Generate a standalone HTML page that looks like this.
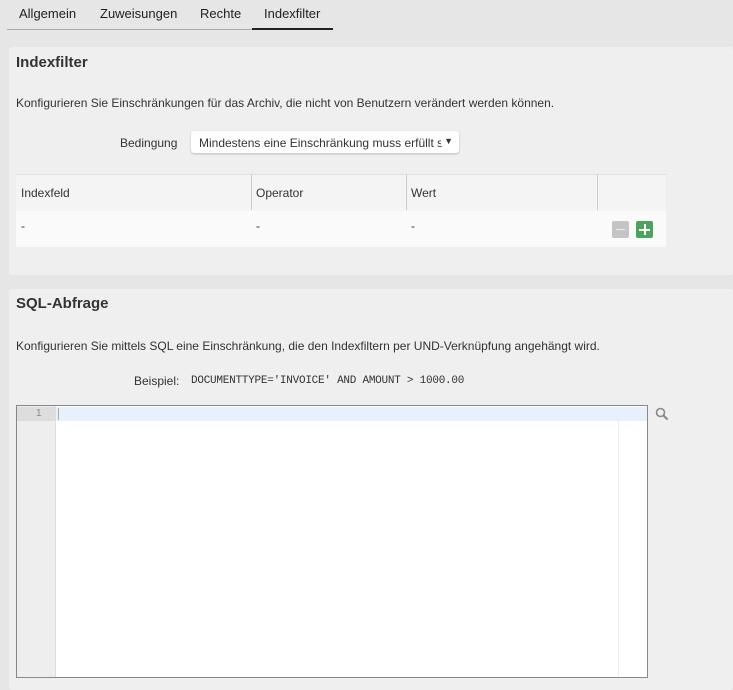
<!DOCTYPE html>
<html><head><meta charset="utf-8"><style>
body{margin:0;width:733px;height:690px;background:#e6e6e6;font-family:"Liberation Sans",sans-serif;color:#333;position:relative;overflow:hidden;font-size:12px}
.a{position:absolute}
.tab{position:absolute;top:6px;font-size:13px;color:#222}
.panel{position:absolute;left:9px;right:0;background:#efefef;border-radius:3px}
h2{position:absolute;margin:0;font-size:15px;font-weight:bold;color:#333;left:7px}
</style></head><body>
<div class="a" style="left:7px;top:29px;width:326px;height:1px;background:#aaa"></div>
<div class="a" style="left:252px;top:28px;width:81px;height:2px;background:#222"></div>
<div class="tab" style="left:19px">Allgemein</div>
<div class="tab" style="left:100px">Zuweisungen</div>
<div class="tab" style="left:200px">Rechte</div>
<div class="tab" style="left:264px">Indexfilter</div>

<div class="panel" style="top:47px;height:228px">
<h2 style="top:7px">Indexfilter</h2>
<div class="a" style="left:7px;top:49px">Konfigurieren Sie Einschränkungen für das Archiv, die nicht von Benutzern verändert werden können.</div>
<div class="a" style="left:111px;top:89px">Bedingung</div>
<div class="a" style="left:182px;top:84px;width:268px;height:22px;background:#fff;border-radius:3px;box-shadow:0 1px 2px #bbb"><span class="a" style="left:8px;top:5px;white-space:nowrap">Mindestens eine Einschränkung muss erfüllt s</span><span class="a" style="right:6px;top:5px;font-size:9px;background:#fff;padding-left:3px">▼</span></div>
<div class="a" style="left:7px;top:127px;width:650px;height:36px;background:#f4f4f4;border-top:1px solid #e0e0e0;border-bottom:1px solid #d8d8d8"></div>
<div class="a" style="left:242px;top:127px;width:1px;height:36px;background:#ccc"></div>
<div class="a" style="left:397px;top:127px;width:1px;height:36px;background:#ccc"></div>
<div class="a" style="left:588px;top:127px;width:1px;height:36px;background:#ccc"></div>
<div class="a" style="left:12px;top:139px">Indexfeld</div>
<div class="a" style="left:247px;top:139px">Operator</div>
<div class="a" style="left:402px;top:139px">Wert</div>
<div class="a" style="left:7px;top:164px;width:650px;height:36px;background:#fafafa"></div>
<div class="a" style="left:12px;top:172px">-</div>
<div class="a" style="left:247px;top:172px">-</div>
<div class="a" style="left:402px;top:172px">-</div>
<div class="a" style="left:603px;top:174px;width:17px;height:17px;background:#c4c4c4;border-radius:2px"><div class="a" style="left:4px;top:8px;width:9px;height:1px;background:#eee"></div></div>
<div class="a" style="left:627px;top:174px;width:17px;height:17px;background:#4ca35f;border-radius:2px"><div class="a" style="left:3px;top:8px;width:11px;height:2px;background:#fff"></div><div class="a" style="left:7.5px;top:3px;width:2px;height:11px;background:#fff"></div></div>
</div>

<div class="panel" style="top:289px;height:401px">
<h2 style="top:6px">SQL-Abfrage</h2>
<div class="a" style="left:7px;top:50px">Konfigurieren Sie mittels SQL eine Einschränkung, die den Indexfiltern per UND-Verknüpfung angehängt wird.</div>
<div class="a" style="left:125px;top:85px">Beispiel:</div>
<div class="a" style="left:182px;top:86px;font-family:'Liberation Mono',monospace;font-size:11px;letter-spacing:-0.25px">DOCUMENTTYPE='INVOICE' AND AMOUNT &gt; 1000.00</div>
<div class="a" style="left:7px;top:116px;width:630px;height:271px;border:1px solid #888;background:#fff">
<div class="a" style="left:0;top:0;width:38px;height:271px;background:#eee;border-right:1px solid #ddd"></div>
<div class="a" style="left:0;top:1px;width:38px;height:14px;background:#ddd"></div>
<div class="a" style="left:19px;top:2px;font-size:10px;color:#888">1</div>
<div class="a" style="left:39px;top:1px;width:591px;height:14px;background:#e8f0fb"></div>
<div class="a" style="left:41px;top:2px;width:1px;height:12px;background:#aaa"></div>
<div class="a" style="left:601px;top:15px;width:1px;height:256px;background:#eee"></div>
</div>
<svg class="a" style="left:646px;top:118px" width="14" height="14" viewBox="0 0 14 14"><circle cx="5.5" cy="5.5" r="4" fill="none" stroke="#888" stroke-width="1.6"/><line x1="8.5" y1="8.5" x2="12.5" y2="12.5" stroke="#888" stroke-width="2.2"/></svg>
</div>
</body></html>
